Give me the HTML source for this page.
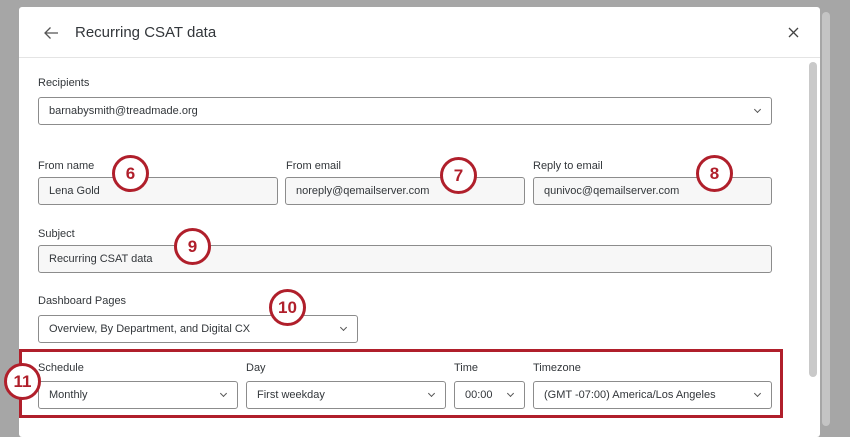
<!DOCTYPE html>
<html><head><style>
*{box-sizing:border-box;margin:0;padding:0}
body{width:850px;height:426px;overflow:hidden;background:#a6a6a6;font-family:"Liberation Sans",sans-serif;position:relative;color:#32363a}
.modal{position:absolute;left:19px;top:7px;width:801px;height:430px;background:#fff;border-radius:3px}
.hdr{position:absolute;left:0;top:0;width:801px;height:51px;border-bottom:1px solid #e4e4e4}
.abs{position:absolute}
.lbl{position:absolute;font-size:11px;color:#32363a;margin-top:1px}
.box{position:absolute;height:28px;border:1px solid #8c8c8c;border-radius:3px;background:#f7f7f7;font-size:11px;padding:0 0 0 10px;line-height:27px;color:#32363a}
.sel{background:#fff}
.chev{position:absolute;right:11px;top:9px;width:5px;height:5px;border-right:1px solid #555;border-bottom:1px solid #555;transform:rotate(45deg)}
.c{position:absolute;width:37px;height:37px;border:3px solid #b01f2b;border-radius:50%;background:#fff;color:#b01f2b;font-size:17px;font-weight:bold;text-align:center;line-height:31px}
</style></head><body>
<div class="abs" style="left:822px;top:12px;width:8px;height:414px;background:#c4c4c4;border-radius:4px"></div>
<div class="modal">
 <div class="hdr">
  <svg class="abs" style="left:24px;top:19px" width="16" height="14" viewBox="0 0 16 14"><path d="M15 7H2M7.5 1.5L2 7l5.5 5.5" fill="none" stroke="#555" stroke-width="1.3"/></svg>
  <div class="abs" style="left:56px;top:17px;font-size:15px;color:#32363a">Recurring CSAT data</div>
  <svg class="abs" style="left:769px;top:20px" width="11" height="11" viewBox="0 0 11 11"><path d="M1 1l9 9M10 1l-9 9" stroke="#444" stroke-width="1.3"/></svg>
 </div>
 <div class="abs" style="left:790px;top:55px;width:8px;height:315px;background:#c9c9c9;border-radius:4px"></div>
</div>
<div class="lbl" style="left:38px;top:76px">Recipients</div>
<div class="box sel" style="left:38px;top:97px;width:734px">barnabysmith@treadmade.org<span class="chev"></span></div>
<div class="lbl" style="left:38px;top:159px">From name</div>
<div class="lbl" style="left:286px;top:159px">From email</div>
<div class="lbl" style="left:533px;top:159px">Reply to email</div>
<div class="box" style="left:38px;top:177px;width:240px">Lena Gold</div>
<div class="box" style="left:285px;top:177px;width:240px">noreply@qemailserver.com</div>
<div class="box" style="left:533px;top:177px;width:239px">qunivoc@qemailserver.com</div>
<div class="lbl" style="left:38px;top:227px">Subject</div>
<div class="box" style="left:38px;top:245px;width:734px">Recurring CSAT data</div>
<div class="lbl" style="left:38px;top:294px">Dashboard Pages</div>
<div class="box sel" style="left:38px;top:315px;width:320px">Overview, By Department, and Digital CX<span class="chev"></span></div>
<div class="abs" style="left:19px;top:349px;width:764px;height:69px;border:3px solid #b01f2b"></div>
<div class="lbl" style="left:38px;top:361px">Schedule</div>
<div class="lbl" style="left:246px;top:361px">Day</div>
<div class="lbl" style="left:454px;top:361px">Time</div>
<div class="lbl" style="left:533px;top:361px">Timezone</div>
<div class="box sel" style="left:38px;top:381px;width:200px">Monthly<span class="chev"></span></div>
<div class="box sel" style="left:246px;top:381px;width:200px">First weekday<span class="chev"></span></div>
<div class="box sel" style="left:454px;top:381px;width:71px">00:00<span class="chev"></span></div>
<div class="box sel" style="left:533px;top:381px;width:239px">(GMT -07:00) America/Los Angeles<span class="chev"></span></div>
<div class="c" style="left:112px;top:155px">6</div>
<div class="c" style="left:440px;top:157px">7</div>
<div class="c" style="left:696px;top:155px">8</div>
<div class="c" style="left:174px;top:228px">9</div>
<div class="c" style="left:269px;top:289px">10</div>
<div class="c" style="left:4px;top:363px">11</div>
</body></html>
